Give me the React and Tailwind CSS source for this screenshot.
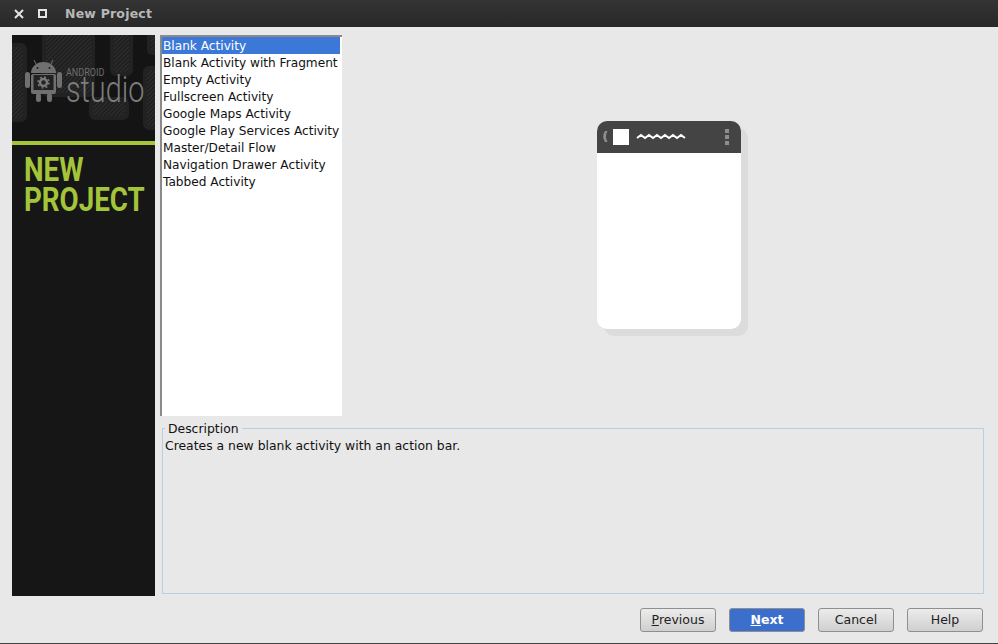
import React from 'react';

const templates = [
    'Blank Activity',
    'Blank Activity with Fragment',
    'Empty Activity',
    'Fullscreen Activity',
    'Google Maps Activity',
    'Google Play Services Activity',
    'Master/Detail Flow',
    'Navigation Drawer Activity',
    'Tabbed Activity',
];

const WizardButton = ({ primary, mnemonic, rest, label }) => (
    <button
        className={`w-[76px] h-[24px] rounded-[3px] border border-[#8f8f8f] text-[12.5px] leading-none ${primary
            ? 'bg-[#3c6fcb] text-white font-bold'
            : 'bg-gradient-to-b from-[#ececec] to-[#cfcfcf] text-[#222]'
            }`}
    >
        {mnemonic && <span className="underline">{mnemonic}</span>}
        {rest}
        {label}
    </button>
);

// dark backdrop of the banner: hatched rounded tiles plus the android head
const BannerArt = () => (
    <svg width="143" height="106" viewBox="0 0 143 106" className="block">
        <defs>
            <pattern id="hatch" width="3" height="3" patternUnits="userSpaceOnUse" patternTransform="rotate(45)">
                <rect width="3" height="3" fill="#1b1b1b" />
                <rect width="1.500" height="3" fill="#2e2e2e" />
            </pattern>
        </defs>
        <rect width="143" height="106" fill="#141414" />
        <g stroke="#222" strokeWidth="4" fill="url(#hatch)">
            <rect x="-6" y="10" width="19" height="75" rx="4" />
            <rect x="32" y="-6" width="49" height="66" rx="4" />
            <rect x="100" y="-6" width="19" height="45" rx="4" />
            <rect x="137" y="-6" width="12" height="24" rx="3" />
            <rect x="133" y="33" width="16" height="60" rx="4" />
            <rect x="79" y="64" width="36" height="19" rx="4" />
        </g>
        <g fill="#707070">
            <path d="M25 31 L22 25 M38 31 L41 25" stroke="#707070" strokeWidth="1" fill="none" />
            <path d="M19 38 a12.500 11 0 0 1 25 0 z" />
            <rect x="19" y="39" width="25" height="20" rx="2" />
            <rect x="13" y="37" width="5" height="16" rx="2.500" />
            <rect x="45" y="37" width="5" height="16" rx="2.500" />
            <rect x="24" y="58" width="5" height="9" rx="2.500" />
            <rect x="35" y="58" width="5" height="9" rx="2.500" />
        </g>
        <circle cx="25.500" cy="33" r="1" fill="#222" />
        <circle cx="37.500" cy="33" r="1" fill="#222" />
        <rect x="21.500" y="40" width="20" height="15" fill="#222" />
        <circle cx="31.500" cy="47.500" r="3.500" fill="none" stroke="#7a7a7a" strokeWidth="2.500" />
        <circle cx="31.500" cy="47.500" r="5.500" fill="none" stroke="#7a7a7a" strokeWidth="1.500" strokeDasharray="2 2.300" />
    </svg>
);

export default function App() {
    return (
        <div
            className="w-[998px] h-[644px] flex flex-col bg-[#e8e8e8] overflow-hidden text-[12.150px] text-[#111]"
            style={{ fontFamily: '"DejaVu Sans", sans-serif' }}
        >
            <div className="h-[27px] shrink-0 flex items-center bg-gradient-to-b from-[#343434] to-[#282828]">
                <span className="w-[38px] pl-[14px] text-[#e4e4e4]">
                    <svg width="10" height="10" viewBox="0 0 10 10"><path d="M1 1 L9 9 M9 1 L1 9" stroke="currentColor" strokeWidth="2" /></svg>
                </span>
                <span className="w-[27px]">
                    <svg width="9" height="9" viewBox="0 0 9 9"><rect x="1" y="1" width="7" height="7" fill="none" stroke="#e4e4e4" strokeWidth="2" /></svg>
                </span>
                <span className="mt-px text-[12.500px] font-bold text-[#b8b8b8] tracking-[0.2px]">New Project</span>
            </div>

            <div className="flex-1 flex flex-col pt-[8px] pl-[12px] pr-[14px]">
                <div className="flex h-[561px]">
                    <div className="relative w-[143px] bg-[#161616] shrink-0">
                        <BannerArt />
                        <div className="h-[4px] bg-[#a4c439]" />
                        <div className="pl-[12px] pt-[9px] text-[#a4c439] text-[34px] leading-[30px] font-bold" style={{ fontFamily: 'Roboto, sans-serif' }}>
                            <div className="origin-left scale-x-[0.815] whitespace-nowrap">NEW</div>
                            <div className="origin-left scale-x-[0.815] whitespace-nowrap">PROJECT</div>
                        </div>
                        <div className="absolute left-[54px] top-[33px] text-[#6d6d6d] text-[10px] leading-[10px] origin-left scale-x-[0.9]" style={{ fontFamily: 'Roboto, sans-serif' }}>ANDROID</div>
                        <div className="absolute left-[54px] top-[39px] text-[#7d7d7d] text-[36px] leading-[32px] font-light origin-left scale-x-[0.8]" style={{ fontFamily: 'Roboto, sans-serif' }}>studio</div>
                    </div>

                    <div className="flex-1 flex flex-col pl-[5px]">
                        <div className="flex h-[381px]">
                            <div className="w-[182px] shrink-0 bg-white border-t-2 border-l-2 border-t-[#8a8a8a] border-l-[#8a8a8a]">
                                {templates.map((t, i) => (
                                    <div
                                        key={t}
                                        className={`h-[17px] pl-px leading-[19px] whitespace-nowrap ${i === 0 ? 'bg-[#3c78d8] text-white mr-[2px]' : ''}`}
                                    >
                                        {t}
                                    </div>
                                ))}
                            </div>
                            <div className="flex-1 flex items-center justify-center pl-[11px] pb-[2px]">
                                <div className="relative w-[144px] h-[208px]">
                                    <div className="absolute left-[7px] top-[7px] w-[144px] h-[208px] rounded-[10px] bg-[#dcdcdc]" />
                                    <div className="relative w-[144px] h-[208px] rounded-[10px] bg-white overflow-hidden">
                                        <div className="h-[32px] bg-[#444] flex items-center">
                                            <svg width="144" height="32" viewBox="0 0 144 32">
                                                <path d="M10.500 10 L8 10 Q4.500 15.500 8 21 L10.500 21 Q7.500 15.500 10.500 10 Z" fill="#8e8e8e" />
                                                <rect x="16" y="8" width="16" height="16" fill="#fff" />
                                                <path d="M40 17 L44 14 L48 17 L52 14 L56 17 L60 14 L64 17 L68 14 L72 17 L76 14 L80 17 L84 14 L88 17" fill="none" stroke="#fff" strokeWidth="2" />
                                                <rect x="128" y="8" width="4" height="4" fill="#8e8e8e" />
                                                <rect x="128" y="14" width="4" height="4" fill="#8e8e8e" />
                                                <rect x="128" y="20" width="4" height="4" fill="#8e8e8e" />
                                            </svg>
                                        </div>
                                    </div>
                                </div>
                            </div>
                        </div>
                        <fieldset className="mt-[5px] ml-[2px] h-[173px] border border-[#b8cfe2] px-[2px] text-[12.400px]">
                            <legend className="px-[3px] ml-0 leading-[15px]">Description</legend>
                            <div className="pt-px leading-[17px]">Creates a new blank activity with an action bar.</div>
                        </fieldset>
                    </div>
                </div>

                <div className="flex justify-end gap-[13px] mt-[12px] pr-[1px]">
                    <WizardButton mnemonic="P" rest="revious" />
                    <WizardButton primary mnemonic="N" rest="ext" />
                    <WizardButton label="Cancel" />
                    <WizardButton label="Help" />
                </div>
            </div>
            <div className="h-px bg-[#444] shrink-0" />
        </div>
    );
}
